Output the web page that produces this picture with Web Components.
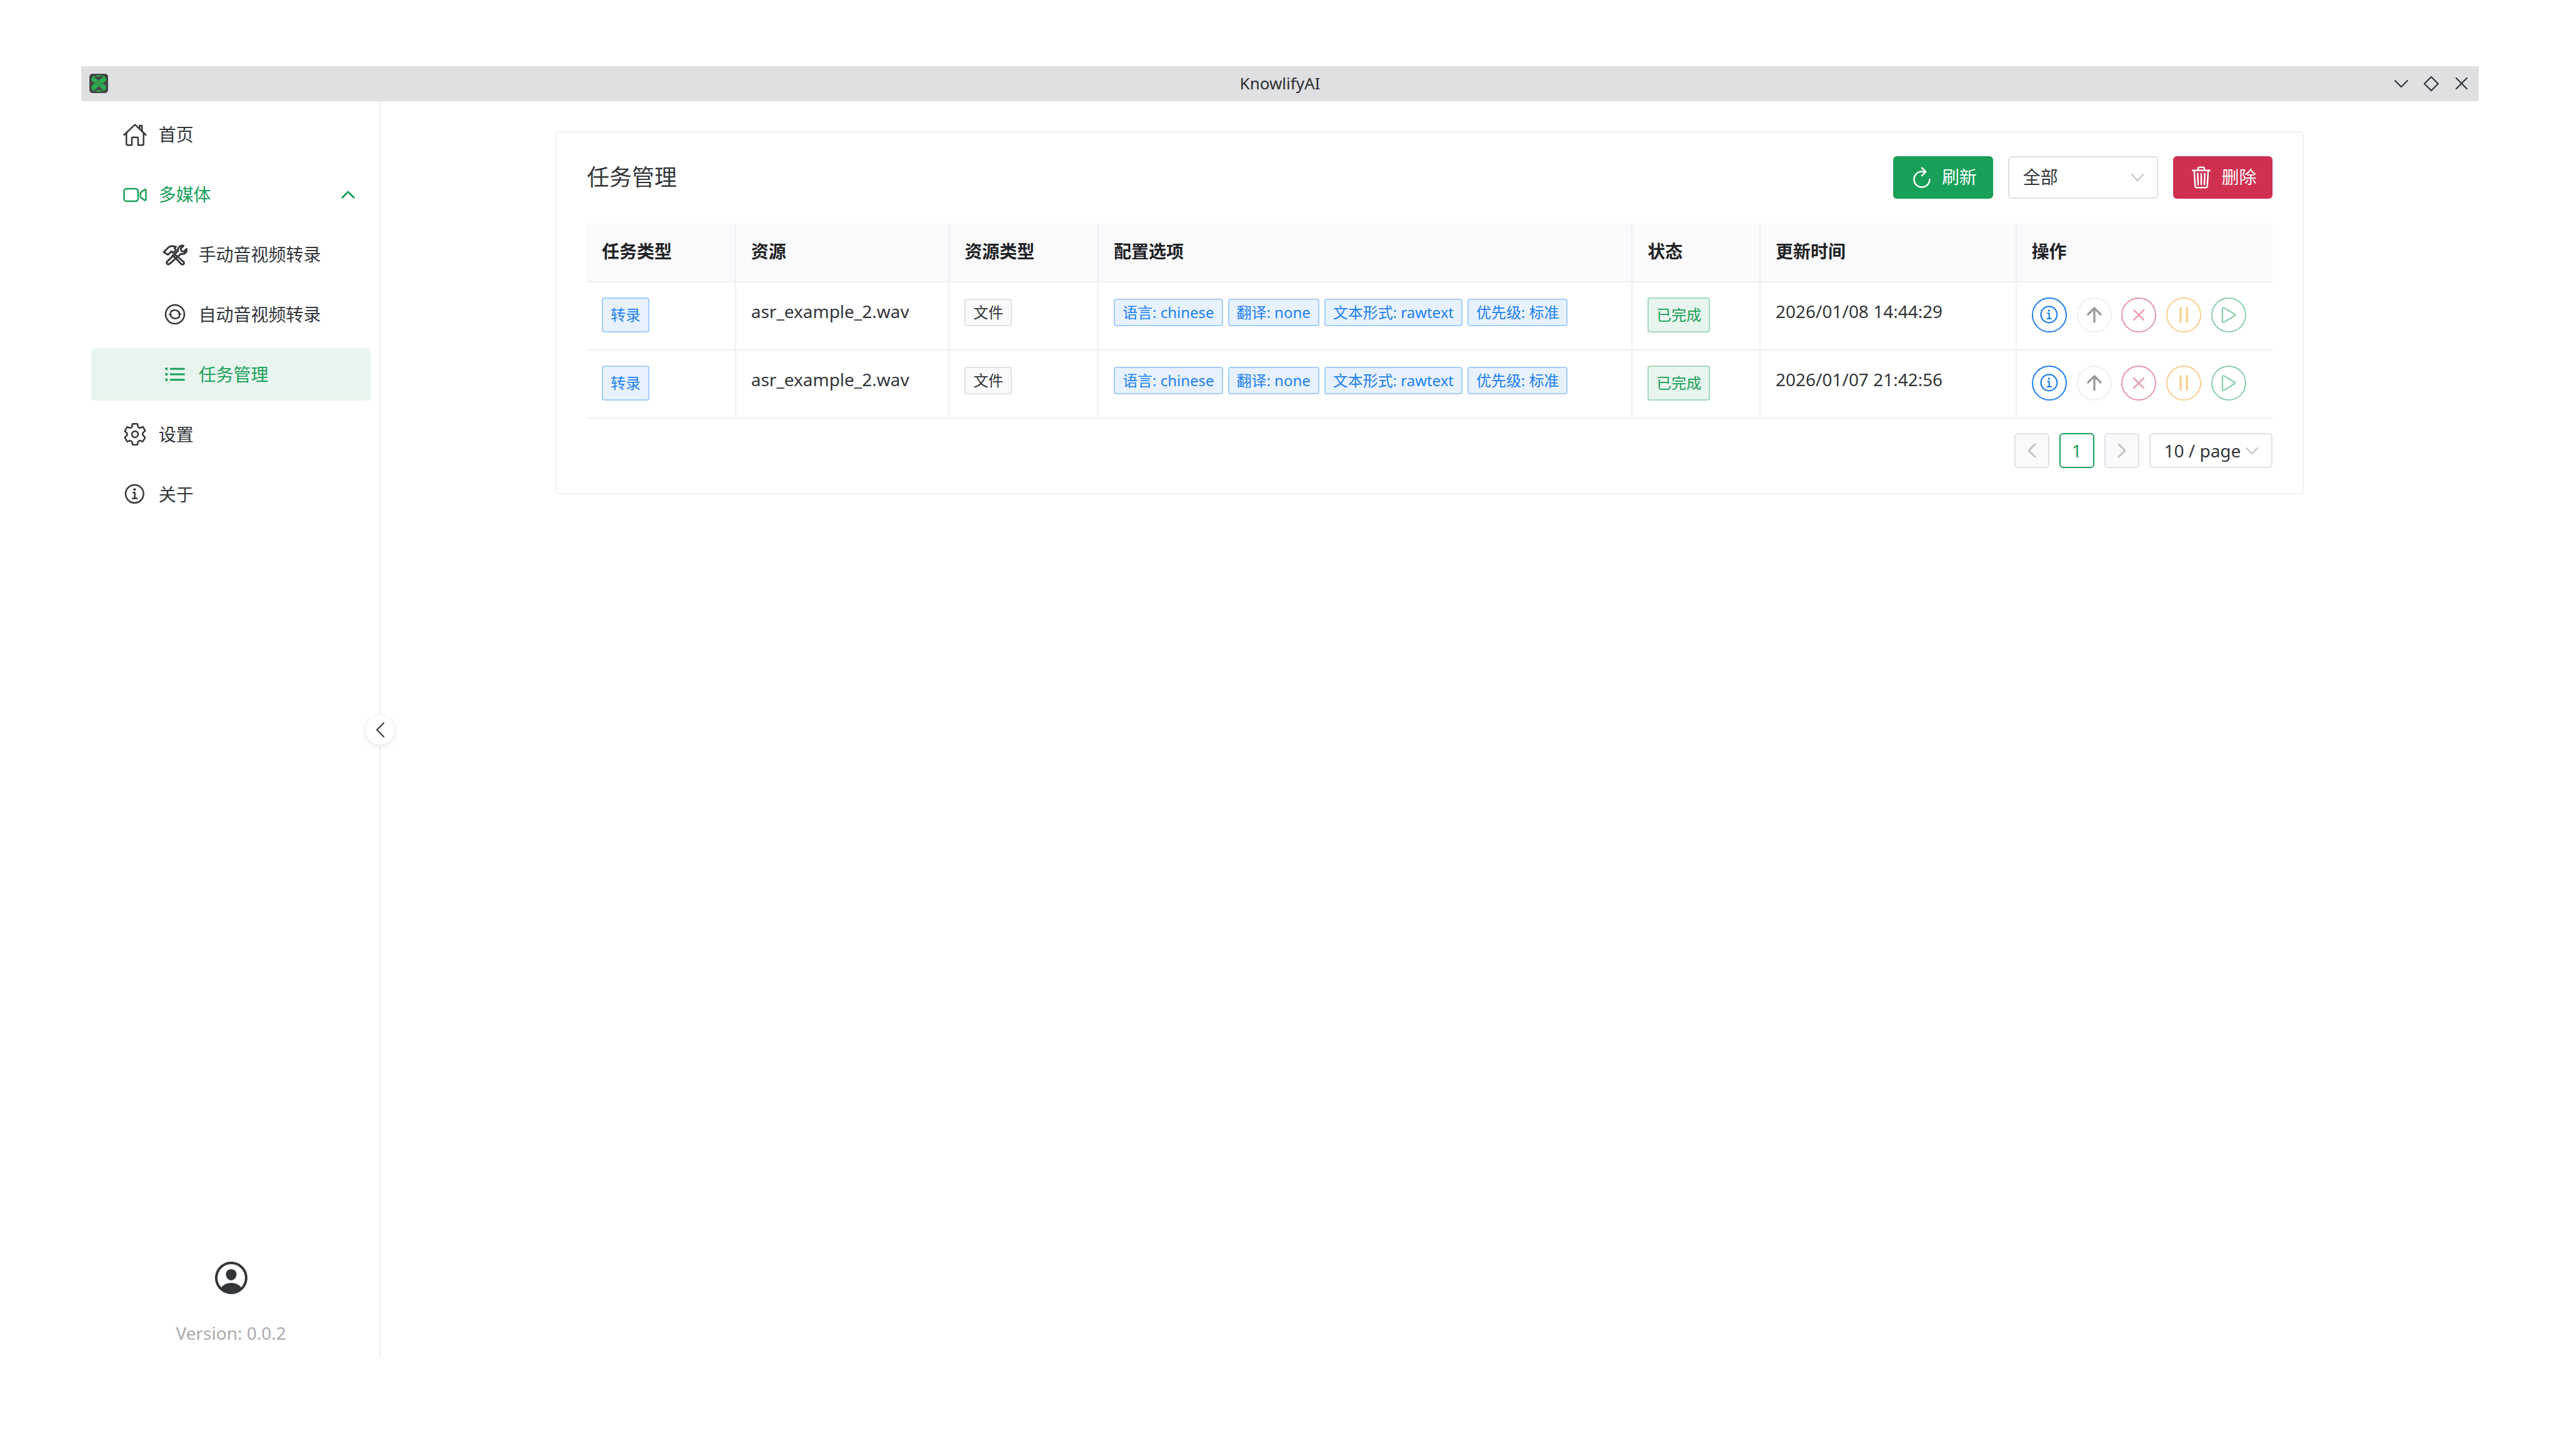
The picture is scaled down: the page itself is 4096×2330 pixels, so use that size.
<!DOCTYPE html>
<html lang="zh">
<head>
<meta charset="utf-8">
<title>KnowlifyAI</title>
<style>
html,body{margin:0;padding:0;background:#fff;overflow:hidden}
body{font-family:"Noto Sans","Noto Sans CJK SC",sans-serif;font-size:28px;line-height:1.6;color:#333639}
</style>
</head>
<body>
<kn-app>
  <kn-titlebar slot="title" label="KnowlifyAI"></kn-titlebar>
  <kn-sidebar slot="side" version="Version: 0.0.2">
    <kn-menu-item icon="home">首页</kn-menu-item>
    <kn-menu-item icon="video" tone="green" chevron>多媒体</kn-menu-item>
    <kn-menu-item icon="tools" level="1">手动音视频转录</kn-menu-item>
    <kn-menu-item icon="sync" level="1">自动音视频转录</kn-menu-item>
    <kn-menu-item icon="list" level="1" tone="green" active>任务管理</kn-menu-item>
    <kn-menu-item icon="settings">设置</kn-menu-item>
    <kn-menu-item icon="info">关于</kn-menu-item>
  </kn-sidebar>
  <kn-card slot="main" heading="任务管理">
    <kn-button slot="tools" icon="refresh" tone="green">刷新</kn-button>
    <kn-select slot="tools" width="240">全部</kn-select>
    <kn-button slot="tools" icon="trash" tone="red">删除</kn-button>
    <kn-row head>
      <kn-cell>任务类型</kn-cell><kn-cell>资源</kn-cell><kn-cell>资源类型</kn-cell><kn-cell>配置选项</kn-cell><kn-cell>状态</kn-cell><kn-cell>更新时间</kn-cell><kn-cell last>操作</kn-cell>
    </kn-row>
    <kn-row>
      <kn-cell><kn-tag type="info" size="big">转录</kn-tag></kn-cell>
      <kn-cell>asr_example_2.wav</kn-cell>
      <kn-cell><kn-tag>文件</kn-tag></kn-cell>
      <kn-cell><kn-tag type="info">语言: chinese</kn-tag><kn-tag type="info">翻译: none</kn-tag><kn-tag type="info">文本形式: rawtext</kn-tag><kn-tag type="info">优先级: 标准</kn-tag></kn-cell>
      <kn-cell><kn-tag type="success" size="big">已完成</kn-tag></kn-cell>
      <kn-cell>2026/01/08 14:44:29</kn-cell>
      <kn-cell last><kn-actions></kn-actions></kn-cell>
    </kn-row>
    <kn-row>
      <kn-cell><kn-tag type="info" size="big">转录</kn-tag></kn-cell>
      <kn-cell>asr_example_2.wav</kn-cell>
      <kn-cell><kn-tag>文件</kn-tag></kn-cell>
      <kn-cell><kn-tag type="info">语言: chinese</kn-tag><kn-tag type="info">翻译: none</kn-tag><kn-tag type="info">文本形式: rawtext</kn-tag><kn-tag type="info">优先级: 标准</kn-tag></kn-cell>
      <kn-cell><kn-tag type="success" size="big">已完成</kn-tag></kn-cell>
      <kn-cell>2026/01/07 21:42:56</kn-cell>
      <kn-cell last><kn-actions></kn-actions></kn-cell>
    </kn-row>
    <kn-pagination slot="foot"></kn-pagination>
  </kn-card>
</kn-app>
<script>
const S='fill="none" stroke="currentColor" stroke-linecap="round" stroke-linejoin="round" stroke-width="32"';
const ICONS={
home:`<path d="M80 212v236a16 16 0 0 0 16 16h96V328a24 24 0 0 1 24-24h80a24 24 0 0 1 24 24v136h96a16 16 0 0 0 16-16V212" ${S}/><path d="M480 256L266.89 52c-5-5.28-16.69-5.34-21.78 0L32 256" ${S}/><path d="M400 179V64h-48v69" ${S}/>`,
video:`<path d="M374.79 308.78L457.5 367a16 16 0 0 0 22.5-14.62V159.62A16 16 0 0 0 457.5 145l-82.71 58.22A16 16 0 0 0 368 216.3v79.4a16 16 0 0 0 6.79 13.08z" ${S}/><path d="M268 384H84a52.15 52.15 0 0 1-52-52V180a52.15 52.15 0 0 1 52-52h184.48A51.68 51.68 0 0 1 320 179.52V332a52.15 52.15 0 0 1-52 52z" ${S}/>`,
sync:`<path d="M448 256c0-106-86-192-192-192S64 150 64 256s86 192 192 192s192-86 192-192z" ${S}/><path d="M165 215A104 104 0 0 1 352 250" ${S}/><path d="M312 244h80l-40 46z" fill="currentColor"/><path d="M347 297A104 104 0 0 1 160 262" ${S}/><path d="M120 268h80l-40-46z" fill="currentColor"/>`,
list:`<path d="M152 144h304M152 256h304M152 368h304" fill="none" stroke="currentColor" stroke-width="40"/><rect x="56" y="118" width="50" height="52" rx="16" fill="currentColor"/><rect x="56" y="230" width="50" height="52" rx="16" fill="currentColor"/><rect x="56" y="342" width="50" height="52" rx="16" fill="currentColor"/>`,
settings:`<path d="M262.29 192.31a64 64 0 1 0 57.4 57.4a64.13 64.13 0 0 0-57.4-57.4zM416.39 256a154.34 154.34 0 0 1-1.53 20.79l45.21 35.46a10.81 10.81 0 0 1 2.45 13.75l-42.77 74a10.81 10.81 0 0 1-13.14 4.59l-44.9-18.08a16.11 16.11 0 0 0-15.17 1.75A164.48 164.48 0 0 1 325 400.8a15.94 15.94 0 0 0-8.82 12.14l-6.73 47.89a11.08 11.08 0 0 1-10.68 9.17h-85.54a11.11 11.11 0 0 1-10.69-8.87l-6.72-47.82a16.07 16.07 0 0 0-9-12.22a155.3 155.3 0 0 1-21.46-12.57a16 16 0 0 0-15.11-1.71l-44.89 18.07a10.81 10.81 0 0 1-13.14-4.58l-42.77-74a10.8 10.8 0 0 1 2.45-13.75l38.21-30a16.05 16.05 0 0 0 6-14.08c-.36-4.17-.58-8.33-.58-12.5s.21-8.27.58-12.35a16 16 0 0 0-6.07-13.94l-38.19-30A10.81 10.81 0 0 1 49.48 186l42.77-74a10.81 10.81 0 0 1 13.14-4.59l44.9 18.08a16.11 16.11 0 0 0 15.17-1.75A164.48 164.48 0 0 1 187 111.2a15.94 15.94 0 0 0 8.82-12.14l6.73-47.89A11.08 11.08 0 0 1 213.23 42h85.54a11.11 11.11 0 0 1 10.69 8.87l6.72 47.82a16.07 16.07 0 0 0 9 12.22a155.3 155.3 0 0 1 21.46 12.57a16 16 0 0 0 15.11 1.71l44.89-18.07a10.81 10.81 0 0 1 13.14-4.58l42.77 74a10.8 10.8 0 0 1-2.45 13.75l-38.21 30a16.05 16.05 0 0 0-6.05 14.08c.33 4.14.55 8.3.55 12.47z" ${S}/>`,
info:`<path d="M248 64C146.39 64 64 146.39 64 248s82.39 184 184 184s184-82.39 184-184S349.61 64 248 64z" ${S}/><path d="M220 220h32v116" ${S}/><path d="M208 340h88" ${S}/><path d="M248 130a26 26 0 1 0 26 26a26 26 0 0 0-26-26z" fill="currentColor"/>`,
refresh:`<path d="M320 146s24.36-12-64-12a160 160 0 1 0 160 160" ${S}/><path d="M256 58l80 80l-80 80" ${S}/>`,
trash:`<path d="M112 112l20 320c.95 18.49 14.4 32 32 32h184c17.67 0 30.87-13.51 32-32l20-320" ${S}/><path d="M80 112h352" ${S}/><path d="M192 112V72h0a23.93 23.93 0 0 1 24-24h80a23.93 23.93 0 0 1 24 24h0v40" ${S}/><path d="M256 176v224M184 176l8 224M328 176l-8 224" ${S}/>`,
up:`<path d="M112 244l144-144l144 144" fill="none" stroke="currentColor" stroke-linecap="round" stroke-linejoin="round" stroke-width="48"/><path d="M256 120v292" fill="none" stroke="currentColor" stroke-linecap="round" stroke-linejoin="round" stroke-width="48"/>`,
close:`<path d="M368 368L144 144M368 144L144 368" ${S}/>`,
pause:`<path d="M176 96h16v320h-16zM320 96h16v320h-16z" ${S}/>`,
play:`<path d="M112 111v290c0 17.44 17 28.52 31 20.16l247.9-148.37c12.12-7.25 12.12-26.33 0-33.58L143 90.84c-14-8.36-31 2.72-31 20.16z" fill="none" stroke="currentColor" stroke-miterlimit="10" stroke-width="32"/>`,
person:`<path d="M258.9 48C141.92 46.42 46.42 141.92 48 258.9c1.56 112.19 92.91 203.54 205.1 205.1c117 1.6 212.48-93.9 210.88-210.88C462.44 140.91 371.09 49.56 258.9 48zm126.42 327.25a4 4 0 0 1-6.14-.32a124.27 124.27 0 0 0-32.35-29.59C321.37 329 289.11 320 256 320s-65.37 9-90.83 25.34a124.24 124.24 0 0 0-32.35 29.58a4 4 0 0 1-6.14.32A175.32 175.32 0 0 1 80 259c-1.63-97.31 78.22-178.76 175.57-179S432 158.81 432 256a175.32 175.32 0 0 1-46.68 119.25z" fill="currentColor"/><path d="M256 144c-19.72 0-37.55 7.39-50.22 20.82s-19 32-17.57 51.93C191.11 256 221.52 288 256 288s64.83-32 67.79-71.25c1.48-19.75-4.8-38.17-17.68-51.85C293.39 151.44 275.59 144 256 144z" fill="currentColor"/>`,
tools:`<g transform="scale(12.8) translate(0 4)" fill="none" stroke="currentColor" stroke-width="2.9" stroke-linejoin="round" stroke-linecap="round"><path d="M2 11.5L9.5 4C12.5 1.4 17 1.2 21.5 3.2L19.2 5.4L21.8 8.2L17.2 12.6L14.6 10.2L8.6 15.6Z"/><path d="M19.5 14.8L33.8 27.2C35 28.6 34.6 30 33.4 30.8C32.2 31.6 30.8 31.2 29.8 30.2L16.4 16.4"/><path d="M33.6 1.4L29 6L30.4 9.6L34 11L38.4 6.4C39.6 11.6 35.4 16 29.6 14.2L11.4 30.2C10 31.4 8.4 31.2 7.4 30.2C6.4 29 6.4 27.6 7.6 26.4L24.8 9.8C23.6 4.6 28.6 -0.2 33.6 1.4Z"/></g>`
};
function def(name,css,html,extra){
  class E extends HTMLElement{
    constructor(){super();this.attachShadow({mode:'open'});}
    connectedCallback(){
      const h=typeof html==='function'?html(this):html;
      this.shadowRoot.innerHTML=`<style>${css}</style>${h}`;
      if(extra)extra(this);
    }
  }
  customElements.define(name,E);
}
const ico=(n,sz)=>`<kn-icon name="${n}" size="${sz}"></kn-icon>`;
const chev=(d,w,h,col,sw)=>`<svg width="${w}" height="${h}" viewBox="0 0 ${w} ${h}" style="display:block;flex:none"><path d="${d}" fill="none" stroke="${col}" stroke-width="${sw}" stroke-linecap="round" stroke-linejoin="round"/></svg>`;

def('kn-icon',`:host{display:block;flex:none;line-height:0}svg{display:block}`,
  el=>{const s=el.getAttribute('size')||40;return `<svg xmlns="http://www.w3.org/2000/svg" width="${s}" height="${s}" viewBox="0 0 512 512">${ICONS[el.getAttribute('name')]||''}</svg>`;});

def('kn-app',`:host{display:block;zoom:.999;box-sizing:border-box;width:4100px;height:2332px;padding:106px 130px 156px}
.shell{display:grid;grid-template-columns:480px 1fr;grid-template-rows:56px 1fr;height:100%}
.t{display:block;grid-column:1/3}
main{min-width:0}`,
`<div class="shell"><div class="t"><slot name="title"></slot></div><slot name="side"></slot><main><slot name="main"></slot></main></div>`);

def('kn-titlebar',`:host{display:grid;grid-template-columns:1fr auto 1fr;align-items:center;height:56px;background:#dfe0e2;color:#333639}
.logo{margin-left:13px;display:block}
.label{font-size:26px;line-height:56px;color:#2b2d30}
.ctl{display:flex;justify-content:flex-end;align-items:center;padding-right:17px}
.ctl svg{display:block;flex:none}`,
el=>`<svg class="logo" width="30" height="31" viewBox="0 0 30 31"><rect width="30" height="31" rx="5" fill="#444746"/>
<g fill="none" stroke-linecap="butt">
<path d="M9 5A4 4 0 0 0 5 10L9.5 14.5M21 5A4 4 0 0 1 25 10L20.5 14.5M9 26A4 4 0 0 1 5 21L9.5 16.5M21 26A4 4 0 0 0 25 21L20.5 16.5" stroke="#2bb24f" stroke-width="3.2"/>
<path d="M11 4A11 11 0 0 1 19 4M11 27A11 11 0 0 0 19 27" stroke="#2bb24f" stroke-width="2.2"/>
<path d="M7.5 22.8L22.5 8.2" stroke="#2bb24f" stroke-width="6"/>
<path d="M8.5 9.2L21.5 21.8" stroke="#444746" stroke-width="6.6"/><path d="M7.5 8.2L22.5 22.8" stroke="#2bb24f" stroke-width="5.6"/><path d="M10 10.6L20 20.4" stroke="#444746" stroke-width=".8"/>
</g></svg>
<span class="label">${el.getAttribute('label')}</span>
<div class="ctl">
${chev('M2 2L12 12L22 2',24,14,'#333639',2.2)}
<span style="width:23px"></span>
${chev('M13 2L24 13L13 24L2 13Z',26,26,'#333639',2.2)}
<span style="width:25px"></span>
${chev('M2 2L19 19M19 2L2 19',21,21,'#333639',2.2)}
</div>`);

def('kn-sidebar',`:host{display:flex;flex-direction:column;position:relative;box-sizing:border-box;width:480px;border-right:2.1px solid #efeff5;padding-top:12px}
nav{display:flex;flex-direction:column;gap:12px}
footer{margin-top:auto;display:flex;flex-direction:column;align-items:center;padding-bottom:21px;margin-right:-2px;color:#333639}
.v{font-size:28px;line-height:38px;margin-top:38px;color:#a9abad}
.c{position:absolute;right:-25px;top:50%;margin-top:-24px;width:48px;height:48px;border-radius:50%;background:#fff;box-shadow:0 4px 10px rgba(0,0,0,.07),0 0 0 1px #f2f2f5;display:flex;align-items:center;justify-content:center}`,
el=>`<nav><slot></slot></nav><footer>${ico('person',64)}<div class="v">${el.getAttribute('version')}</div></footer>
<div class="c">${chev('M13 2L2 13L13 24',15,26,'#333639',2)}</div>`);

def('kn-menu-item',`:host{display:flex;align-items:center;box-sizing:border-box;width:448px;height:84px;margin-left:16px;border-radius:6px;padding-left:50px;padding-right:25px;color:#333639;font-size:28px;white-space:nowrap}
:host([level="1"]){padding-left:114px}
:host([tone="green"]){color:#18a058}
:host([active]){background:#e8f5ee}
.l{margin-left:18px;flex:1}`,
el=>`${ico(el.getAttribute('icon'),40)}<span class="l"><slot></slot></span>${el.hasAttribute('chevron')?chev('M2 12L11 3L20 12',22,15,'#18a058',3):''}`);

def('kn-card',`:host{display:block;box-sizing:border-box;width:2800px;margin:48px 0 0 280px;padding:38px 48px 40px;border:2.1px solid #efeff5;border-radius:6px;background:#fff}
header{display:flex;align-items:center;justify-content:space-between;height:68px;margin-bottom:40px}
h2{margin:0;font-weight:400;font-size:36px;line-height:1.6;color:#333639}
.tools{display:flex;gap:24px}
.foot{display:block;margin-top:23px}`,
el=>`<header><h2>${el.getAttribute('heading')}</h2><div class="tools"><slot name="tools"></slot></div></header><section><slot></slot></section><div class="foot"><slot name="foot"></slot></div>`);

def('kn-button',`:host{display:flex;align-items:center;box-sizing:border-box;height:68px;width:160px;padding-left:26px;border-radius:6px;color:#fff;font-size:28px;white-space:nowrap}
:host([tone="green"]){background:#18a058}
:host([tone="red"]){background:#d03050}
.l{margin-left:12px}`,
el=>`${ico(el.getAttribute('icon'),40)}<span class="l"><slot></slot></span>`);

def('kn-select',`:host{display:flex;align-items:center;justify-content:space-between;box-sizing:border-box;height:68px;padding:0 20px 0 22px;border:2.1px solid #e0e0e6;border-radius:6px;background:#fff;font-size:28px;color:#333639}`,
el=>{return `<span><slot></slot></span>${chev('M2 2L11 12L20 2',22,14,'#c2c2c2',2)}`;},
el=>{el.style.width=el.getAttribute('width')+'px';});

def('kn-row',`:host{display:grid;grid-template-columns:239px 342px 239px 855px 205px 410px 410px;height:109px}
:host([head]){height:95px;background:#fafafc;font-weight:600;color:#1f2225}
:host([head]) ::slotted(kn-cell){padding-top:22px}`,`<slot></slot>`);

def('kn-cell',`:host{display:flex;flex-wrap:nowrap;align-items:flex-start;gap:8px;box-sizing:border-box;padding:24px 24px 0;border-right:2.1px solid #efeff5;border-bottom:2.1px solid #efeff5;line-height:45px;white-space:nowrap;min-width:0}
:host([last]){border-right:0}`,`<slot></slot>`);

def('kn-tag',`:host{display:inline-flex;align-items:center;flex:none;box-sizing:border-box;height:44px;margin-top:2px;padding:0 12px;border:2.1px solid #e0e0e6;border-radius:4px;background:#fafafc;color:#333639;font-size:24px;font-weight:400;line-height:1}
:host([size="big"]){height:56px;margin-top:0}
:host([type="info"]){background:#e8f2fe;border-color:#a6cdfa;color:#2080f0}
:host([type="success"]){background:#e8f5ee;border-color:#a3d9bc;color:#18a058}`,`<slot></slot>`);

def('kn-actions',`:host{display:flex;gap:16px}
.b{box-sizing:border-box;width:56px;height:56px;border-radius:50%;border:2.1px solid;display:flex;align-items:center;justify-content:center;background:#fff}`,
()=>[['info','#2080f0','#2080f0'],['up','#f0f0f2','#999a9c'],['close','#e897a7','#e897a7'],['pause','#f7cf8f','#f7cf8f'],['play','#8bcfab','#8bcfab']]
 .map(([n,b,c])=>`<div class="b" style="border-color:${b};color:${c}">${ico(n,36)}</div>`).join(''));

def('kn-pagination',`:host{display:flex;justify-content:flex-end;gap:16px;font-size:28px;color:#333639}
.p{box-sizing:border-box;width:56px;height:56px;border:2.1px solid #e0e0e6;border-radius:6px;display:flex;align-items:center;justify-content:center;background:#fafafc}
.a{background:#fff;border-color:#18a058;color:#18a058}
.s{box-sizing:border-box;width:198px;height:56px;border:2.1px solid #e0e0e6;border-radius:6px;display:flex;align-items:center;justify-content:space-between;padding:0 20px 0 22px;background:#fff;white-space:nowrap}`,
`<div class="p">${chev('M12 2L2 12L12 22',14,24,'#c2c2c2',3)}</div><div class="p a">1</div><div class="p">${chev('M2 2L12 12L2 22',14,24,'#c2c2c2',3)}</div><div class="s"><span>10 / page</span>${chev('M2 2L11 11L20 2',22,13,'#c2c2c2',2)}</div>`);
</script>
</body>
</html>
